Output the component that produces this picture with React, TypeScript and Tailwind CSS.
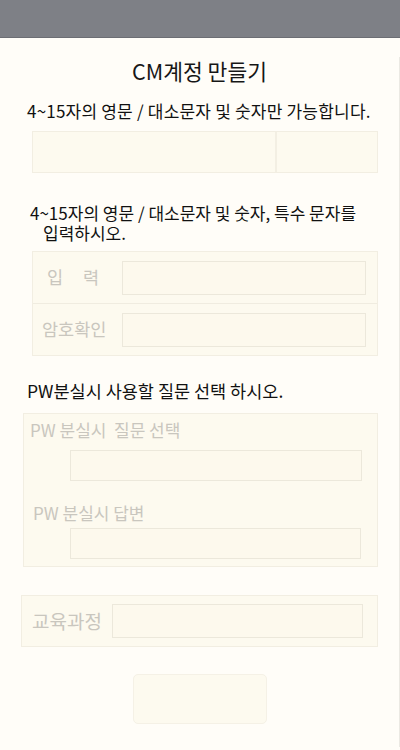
const font = { fontFamily: '"Noto Sans CJK KR", "Noto Sans", sans-serif' };

function Field({ className }: { className: string }) {
  return <div className={`border border-[#ece8db] bg-[#fdf9ed] ${className}`} />;
}

export default function App() {
  return (
    <div className="w-[400px] h-[750px] bg-[#fffdf8] overflow-hidden" style={font}>
      {/* status bar */}
      <div className="h-[38px] bg-[#7e8086] border-b border-[#6c6e74]" />

      <div className="relative border-r border-[#ebe9e3] h-[690px]">
        <h1 className="mt-[19px] text-center text-[21.5px] leading-[28px] text-[#161616]">CM계정 만들기</h1>

        <p className="mt-[15px] pl-[27px] text-[17px] leading-[22px] text-[#111] whitespace-nowrap tracking-[0.2px]">
          4~15자의 영문 / 대소문자 및 숫자만 가능합니다.
        </p>

        {/* id box */}
        <div className="mt-[9px] ml-[32px] w-[346px] h-[42px] flex border border-[#f2eee2] bg-[#fdfaef]">
          <div className="w-[244px] border-r-2 border-[#f3efe3]" />
          <div className="flex-1" />
        </div>

        <p className="mt-[30px] w-[372px] pl-[43px] -indent-[13px] text-[17px] leading-[20px] text-[#111]">
          4~15자의 영문 / 대소문자 및 숫자, 특수 문자를 입력하시오.
        </p>

        {/* password box */}
        <div className="mt-[8px] ml-[32px] w-[346px] border border-[#f2eee2] bg-[#fdfaef] text-[#c9c6be] text-[17.5px]">
          <div className="h-[52px] flex items-center border-b border-[#f0ece0]">
            <div className="w-[89px] pl-[14px] flex gap-[20px]">
              <span>입</span>
              <span>력</span>
            </div>
            <Field className="w-[244px] h-[34px]" />
          </div>
          <div className="h-[51px] flex items-center">
            <div className="w-[89px] pl-[9px]">암호확인</div>
            <Field className="w-[244px] h-[34px]" />
          </div>
        </div>

        <p className="mt-[24px] pl-[27px] text-[17.5px] leading-[22px] text-[#111]">PW분실시 사용할 질문 선택 하시오.</p>

        {/* question box */}
        <div className="mt-[11px] ml-[23px] w-[355px] h-[154px] border border-[#f2eee2] bg-[#fdfaef] text-[#c9c6be] text-[17px]">
          <div className="mt-[5px] pl-[6px] leading-[22px]">PW 분실시&nbsp; 질문 선택</div>
          <Field className="mt-[9px] ml-[46px] w-[292px] h-[31px]" />
          <div className="mt-[21px] pl-[9px] leading-[22px]">PW 분실시 답변</div>
          <Field className="mt-[4px] ml-[46px] w-[291px] h-[31px]" />
        </div>

        {/* course box */}
        <div className="mt-[28px] ml-[21px] w-[357px] h-[52px] flex items-center border border-[#f2eee2] bg-[#fdfaef]">
          <div className="w-[90px] pl-[10px] text-[19px] text-[#c9c6be] whitespace-nowrap">교육과정</div>
          <Field className="w-[251px] h-[34px]" />
        </div>

        <div className="mt-[27px] mx-auto w-[134px] h-[50px] rounded-[5px] border border-[#f5f1e6] bg-[#fdfaef]" />
      </div>
    </div>
  );
}
